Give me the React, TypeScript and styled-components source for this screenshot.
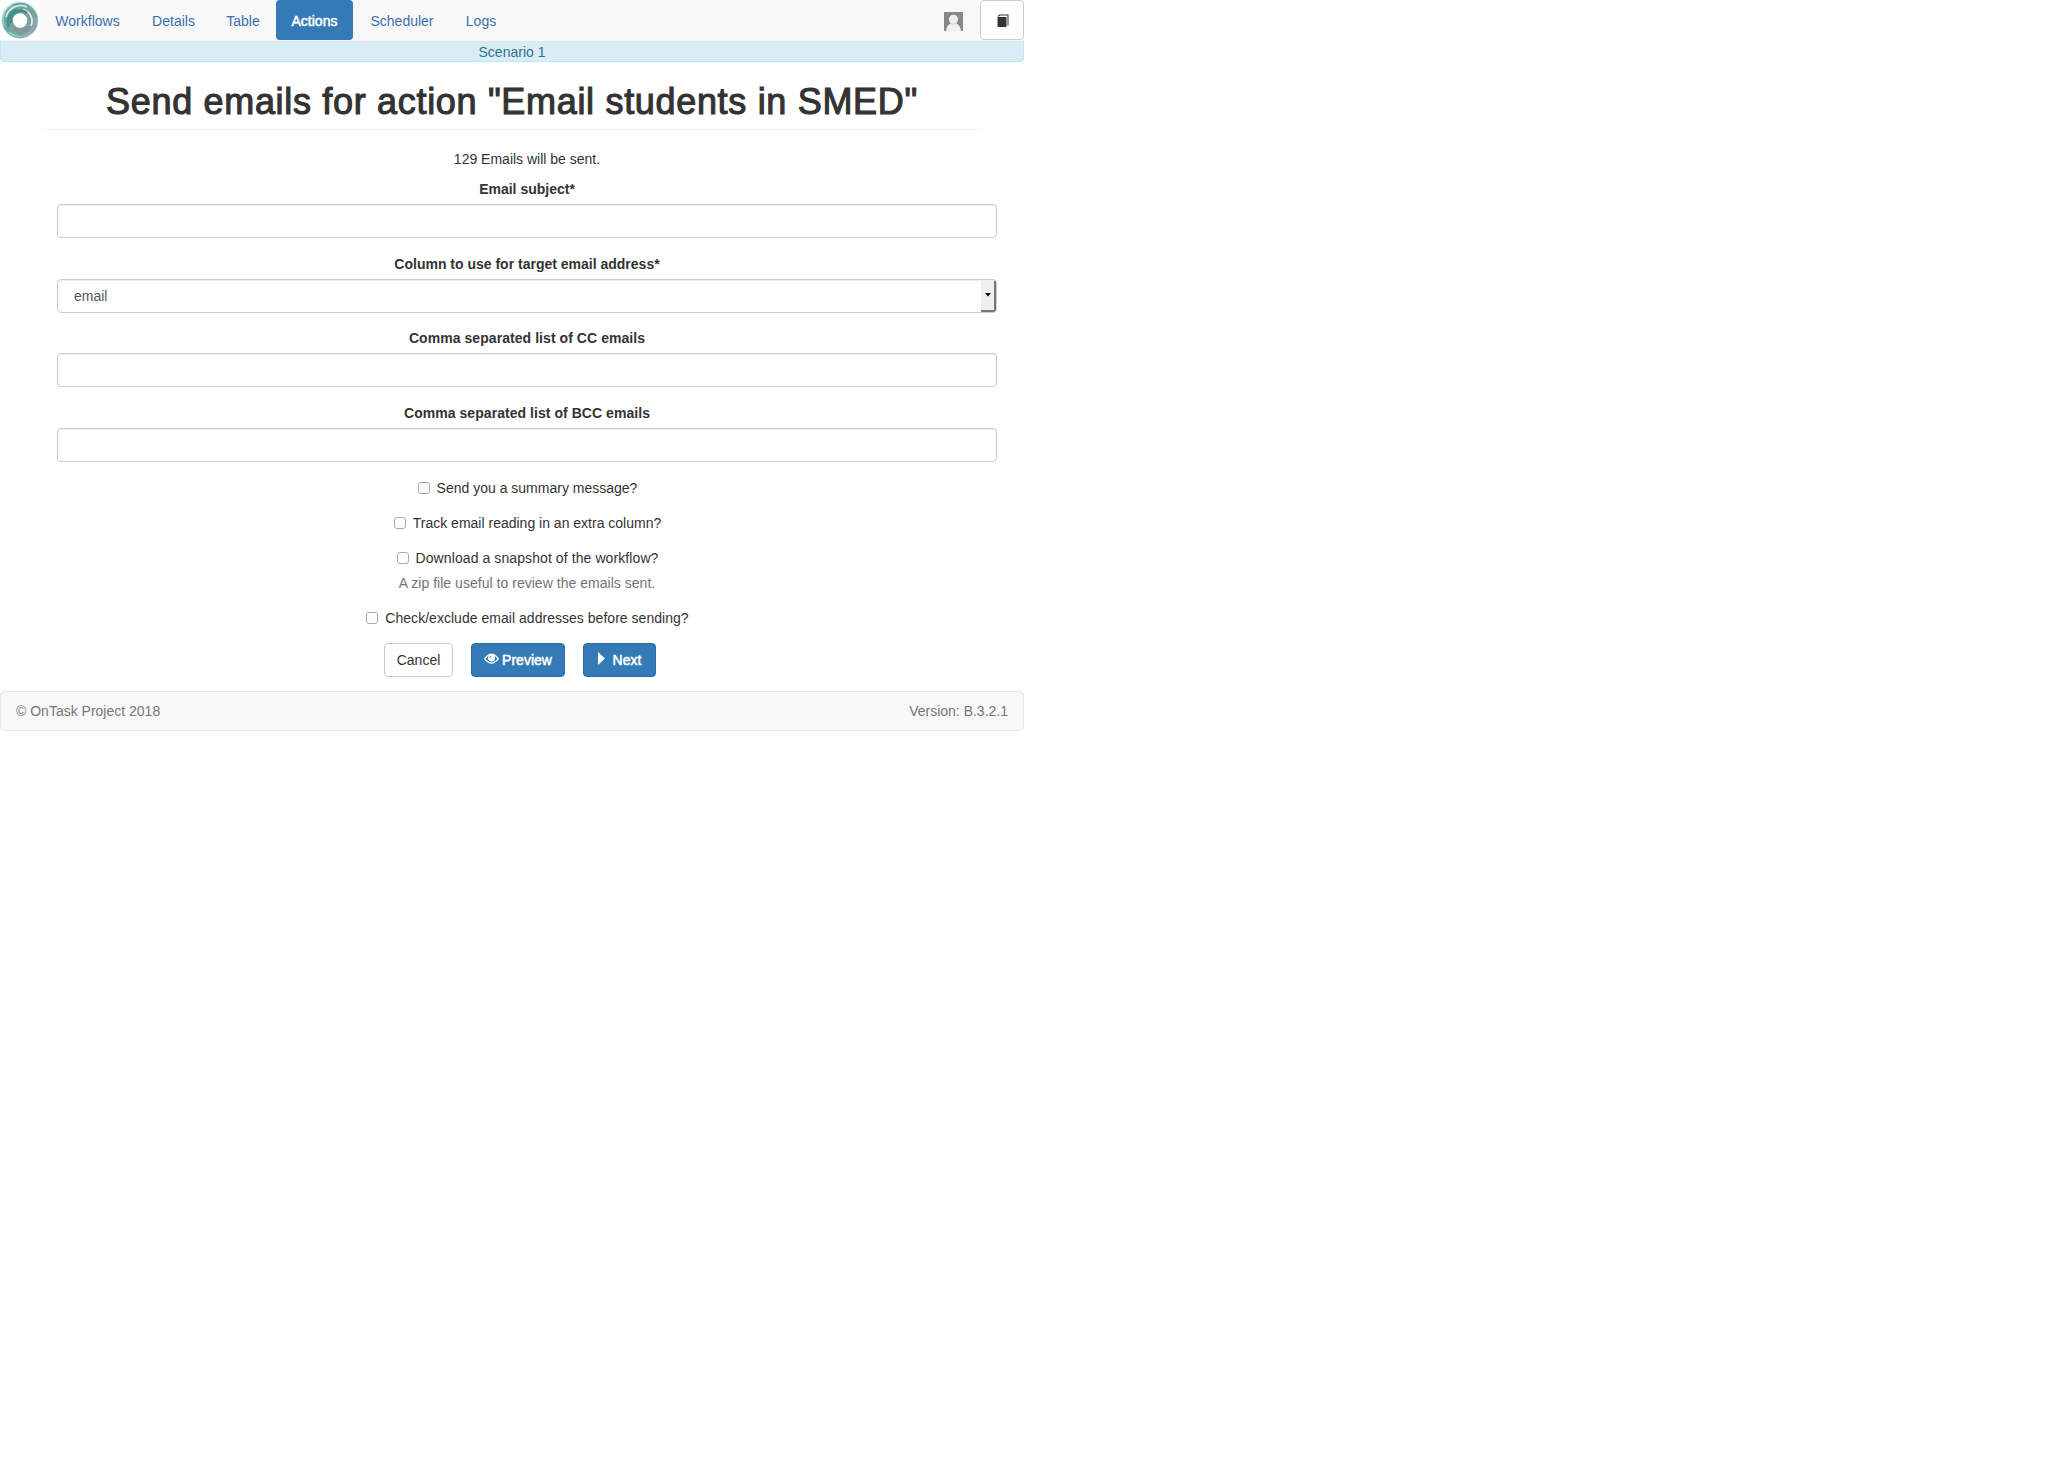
import React from 'react';
import styled, { createGlobalStyle, css } from 'styled-components';

const Global = createGlobalStyle`
  *, *::before, *::after { box-sizing: border-box; }
  body {
    margin: 0;
    background: #fff;
    color: #333;
    font: 14px/20px "Helvetica Neue", "Liberation Sans", Arial, sans-serif;
  }
`;

const Page = styled.div`
  width: 1024px;
`;

const Navbar = styled.nav`
  display: flex;
  height: 41px;
  background: #f8f8f8;
`;

const Brand = styled.a`
  width: 40px;
  height: 40px;
  background: #fff;
  svg { display: block; }
`;

const Pills = styled.div`
  display: flex;
  flex: 1;
  gap: 2px;
`;

const Pill = styled.a<{ $active?: boolean; $w: number }>`
  display: flex;
  align-items: center;
  justify-content: center;
  width: ${p => p.$w}px;
  height: 40px;
  padding-top: 2px;
  border-radius: 4px;
  color: #3a6fae;
  ${p => p.$active && css`
    color: #fff;
    background: #337ab7;
    -webkit-text-stroke: 0.5px #fff;
  `}
`;

const Avatar = styled.a`
  width: 19px;
  height: 19px;
  margin: 12px 17px 0 0;
  svg { display: block; }
`;

const BookButton = styled.button`
  display: flex;
  justify-content: center;
  width: 44px;
  height: 40px;
  padding: 13px 0 0 1px;
  border: 1px solid #ccc;
  border-radius: 4px;
  background: #fff;
`;

const Context = styled.div`
  height: 21px;
  border: 1px solid #bce8f1;
  border-top-color: #dbe9ee;
  border-radius: 0 0 4px 4px;
  background: #d9edf7;
  color: #31708f;
  text-align: center;
  line-height: 21px;
`;

const Title = styled.h1`
  margin: 0 42px;
  height: 68px;
  padding-top: 20px;
  border-bottom: 1px solid #eee;
  text-align: center;
  white-space: nowrap;
  font-size: 36px;
  line-height: 40px;
  font-weight: 400;
  letter-spacing: 0.68px;
  -webkit-text-stroke: 1.1px #333;
`;

const Form = styled.form`
  display: flex;
  flex-direction: column;
  width: 940px;
  margin: 19px 0 0 57px;
  text-align: center;
`;

const Notice = styled.p`
  margin: 0 0 10px;
`;

const Field = styled.div`
  display: flex;
  flex-direction: column;
  height: 74.67px;
`;

const Label = styled.label<{ $spacing?: number }>`
  margin-bottom: 5px;
  font-weight: 700;
  letter-spacing: ${p => p.$spacing ?? 0}px;
`;

const control = css`
  width: 100%;
  height: 34px;
  border: 1px solid #ccc;
  border-radius: 4px;
  background: #fff;
  box-shadow: inset 0 1px 1px rgba(0, 0, 0, 0.075);
`;

const Input = styled.input`
  ${control}
  padding: 6px 12px;
`;

const Select = styled.div`
  ${control}
  display: flex;
  justify-content: space-between;
  padding-left: 16px;
  color: #555;
  line-height: 33px;
`;

const Arrow = styled.span`
  display: flex;
  align-items: center;
  justify-content: center;
  width: 15px;
  height: 31px;
  margin-top: 1px;
  border-right: 2px solid #777;
  border-bottom: 2px solid #777;
  border-radius: 0 0 3px 0;
  background: #efefef;
`;

const Check = styled.label<{ $gap?: number; $spacing?: number }>`
  display: flex;
  justify-content: center;
  gap: 7px;
  height: 20px;
  margin-bottom: ${p => p.$gap ?? 15}px;
  padding-left: 1px;
  letter-spacing: ${p => p.$spacing ?? 0}px;
`;

const Box = styled.input`
  appearance: none;
  width: 12px;
  height: 12px;
  margin: 4px 0 0;
  border: 1px solid #a9a9a9;
  border-radius: 3px;
  background: #fff;
`;

const Help = styled.p`
  margin: 0 0 15px;
  color: #737373;
  letter-spacing: 0.03px;
`;

const Buttons = styled.div`
  display: flex;
  gap: 18px;
  margin-left: 327px;
`;

const Button = styled.button<{ $primary?: boolean; $w: number; $gap?: number }>`
  display: flex;
  align-items: center;
  justify-content: center;
  gap: ${p => p.$gap ?? 3}px;
  width: ${p => p.$w}px;
  height: 34px;
  padding: 0;
  border: 1px solid #ccc;
  border-radius: 4px;
  background: #fff;
  color: #333;
  font: inherit;
  ${p => p.$primary && css`
    border-color: #2e6da4;
    background: #337ab7;
    color: #fff;
    -webkit-text-stroke: 0.5px #fff;
  `}
  svg {
    flex: none;
    margin-top: -2px;
  }
`;

const Footer = styled.footer`
  display: flex;
  justify-content: space-between;
  height: 40px;
  margin-top: 14px;
  padding: 0 15px;
  border: 1px solid #e7e7e7;
  border-radius: 4px;
  background: #f8f8f8;
  color: #777;
  line-height: 39px;
`;

const Logo = () => (
  <svg width="40" height="40" viewBox="0 0 40 40" fill="none">
    <circle cx="20" cy="20" r="17.6" stroke="#b9efe4" strokeWidth="1.6" />
    <circle cx="20" cy="20.5" r="12.5" stroke="#77a3a1" strokeWidth="10.5" />
    <path d="M4 26A17 17 0 0 1 12 5" stroke="#7ee0cf" strokeWidth="1.4" />
    <path d="M9 32A17 17 0 0 0 31 33" stroke="#83dfd0" strokeWidth="1.6" />
    <path d="M6 17A15 15 0 0 1 27 7" stroke="#dff0ee" strokeWidth="1.5" />
    <path d="M9 27A13 13 0 0 1 17 9.5" stroke="#3f9189" strokeWidth="2.5" />
    <path d="M23 9.5A12 12 0 0 1 31 26" stroke="#e4f0ee" strokeWidth="1.7" />
    <path d="M11 23A10 10 0 0 1 27 13" stroke="#3d8f8a" strokeWidth="2.5" />
    <path d="M20 36A16 16 0 0 0 35.5 18" stroke="#a3a3ab" strokeWidth="2.5" />
    <path d="M14 29A11 11 0 0 0 29 28" stroke="#8a9299" strokeWidth="3" />
    <circle cx="20.3" cy="20.8" r="6.5" fill="#fff" />
  </svg>
);

const Person = () => (
  <svg width="19" height="19" viewBox="0 0 19 19">
    <path fill="#888" d="M0 0h19v19H0z" />
    <path fill="#f0f0ee" d="M2 19c.3-3.8 2-6.5 4.800-7.500C5.700 10.500 5 9 5 7.300 5 4.700 7 2.700 9.500 2.700S14 4.700 14 7.300c0 1.700-.7 3.200-1.800 4.200 2.800 1 4.500 3.700 4.800 7.500z" />
    <path d="M7 11.500q2.500 1.500 5 0" fill="none" stroke="#ccc" strokeWidth=".7" />
  </svg>
);

const Book = () => (
  <svg width="12" height="13" viewBox="0 0 12 13" fill="#333">
    <path d="M.5 3h9v10H1.300L.5 12.200z" />
    <path d="M.5 2.400 2.200.5H11.500V11.500H10.500V1.500H3L2 2.400z" />
  </svg>
);

const Eye = () => (
  <svg width="15" height="12" viewBox="0 0 15 12" fill="none" stroke="#fff">
    <path d="M.7 5.800Q7.500-3.600 14.300 5.800 7.500 14.200.7 5.800z" strokeWidth="1.300" />
    <circle cx="7.500" cy="5" r="3.500" fill="#fff" stroke="none" />
    <path d="M5.600 5A2 2 0 0 1 7.500 3.200" stroke="#337ab7" strokeWidth=".9" />
  </svg>
);

const Play = () => (
  <svg width="7" height="13" viewBox="0 0 7 13">
    <path d="M0 0 7 6.500 0 13z" fill="#fff" />
  </svg>
);

export default function App() {
  return (
    <>
      <Global />
      <Page>
        <Navbar>
          <Brand><Logo /></Brand>
          <Pills>
            <Pill $w={95}>Workflows</Pill>
            <Pill $w={73}>Details</Pill>
            <Pill $w={62}>Table</Pill>
            <Pill $w={77} $active>Actions</Pill>
            <Pill $w={94}>Scheduler</Pill>
            <Pill $w={60}>Logs</Pill>
          </Pills>
          <Avatar><Person /></Avatar>
          <BookButton><Book /></BookButton>
        </Navbar>
        <Context>Scenario 1</Context>
        <Title>Send emails for action "Email students in SMED"</Title>
        <Form>
          <Notice>129 Emails will be sent.</Notice>
          <Field>
            <Label>Email subject*</Label>
            <Input />
          </Field>
          <Field>
            <Label>Column to use for target email address*</Label>
            <Select>
              email
              <Arrow><svg width="6" height="4"><path d="M0 0h6L3 3.500z" /></svg></Arrow>
            </Select>
          </Field>
          <Field>
            <Label $spacing={0.06}>Comma separated list of CC emails</Label>
            <Input />
          </Field>
          <Field>
            <Label $spacing={0.05}>Comma separated list of BCC emails</Label>
            <Input />
          </Field>
          <Check><Box type="checkbox" />Send you a summary message?</Check>
          <Check><Box type="checkbox" />Track email reading in an extra column?</Check>
          <Check $gap={5} $spacing={0.09}><Box type="checkbox" />Download a snapshot of the workflow?</Check>
          <Help>A zip file useful to review the emails sent.</Help>
          <Check $spacing={0.03}><Box type="checkbox" />Check/exclude email addresses before sending?</Check>
          <Buttons>
            <Button $w={69} type="button">Cancel</Button>
            <Button $w={94} $primary type="button"><Eye />Preview</Button>
            <Button $w={73} $gap={8} $primary type="button"><Play />Next</Button>
          </Buttons>
        </Form>
        <Footer>
          <span>© OnTask Project 2018</span>
          <span>Version: B.3.2.1</span>
        </Footer>
      </Page>
    </>
  );
}
